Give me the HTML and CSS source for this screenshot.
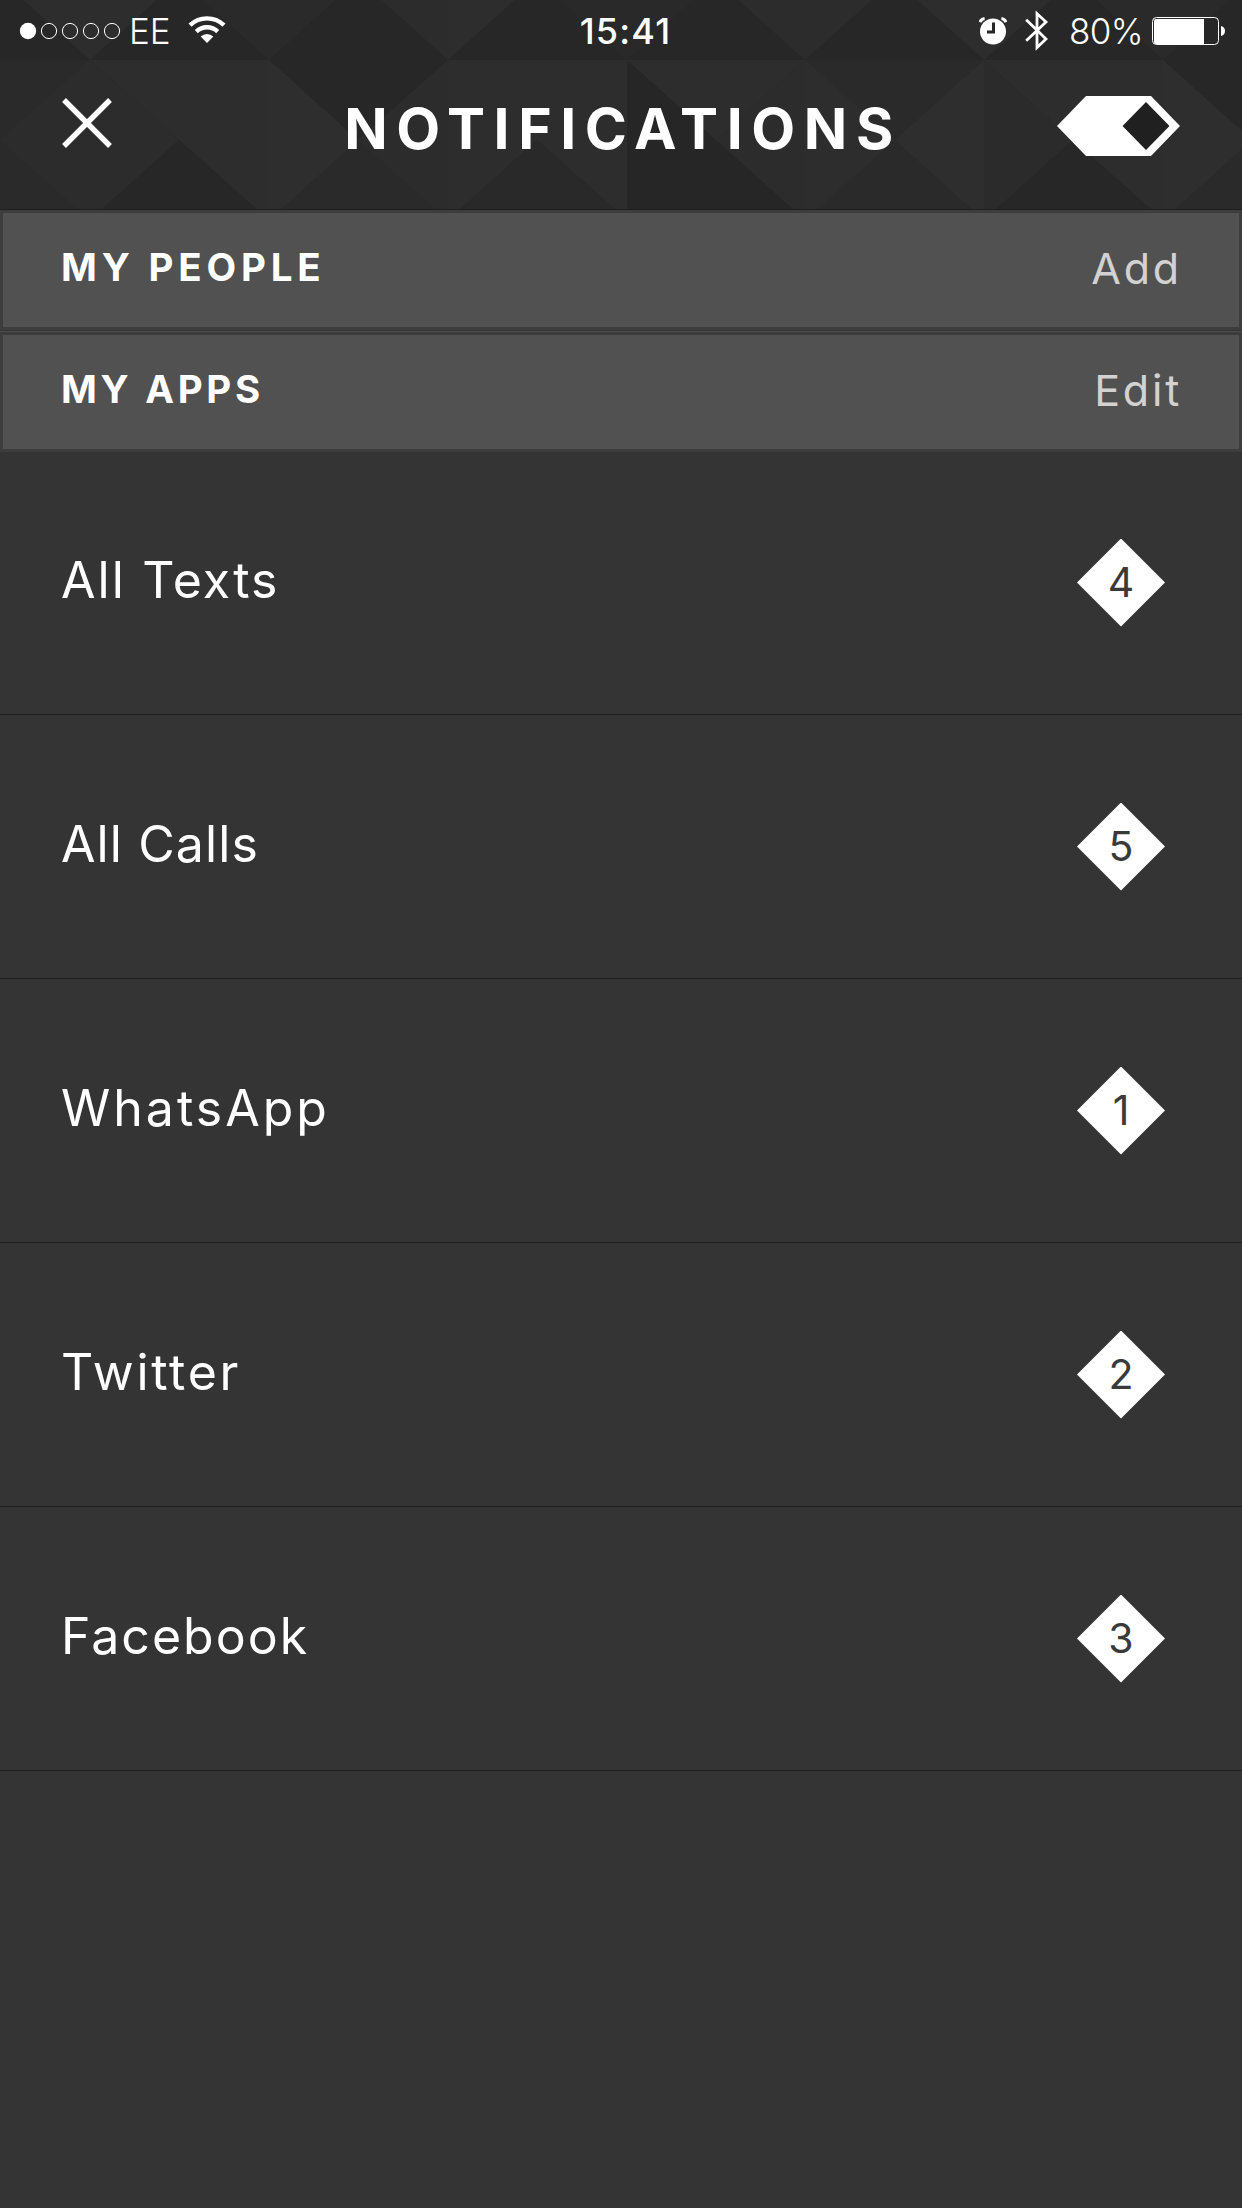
FILE: index.html
```html
<!DOCTYPE html>
<html lang="en">
<head>
    <meta charset="UTF-8">
    <meta name="viewport" content="width=device-width, initial-scale=1.0">
    <title>Notifications</title>
    <link rel="stylesheet" href="styles.css">
</head>
<body>
    <div class="top">
        <!-- faceted background -->
        <svg class="facets" width="1242" height="209" viewBox="0 0 1242 209">
            <rect width="1242" height="209" fill="#272727"/>
            <path fill="#2d2d2d" d="M1-20L90 60L179-20ZM895-20L984 60L1073-20Z"/>
            <path fill="#2a2a2a" d="M180-20L269 60L358-20ZM1074-20L1163 60L1252-20Z"/>
            <path fill="#2c2c2c" d="M359-20L448 60L448-20ZM716-20L805 60L894-20Z"/>
            <path fill="#2d2d2d" d="M448-20V60L537-20Z"/>
            <path fill="#292929" d="M538-20L627 60L716-20Z"/>
            <rect y="60" width="1242" height="149" fill="#2a2a2a"/>
            <path fill="#2c2c2c" d="M90 60L0 140L90 220L179 140Z"/>
            <path fill="#2d2d2d" d="M90 60H269V220L179 140Z"/>
            <path fill="#272727" d="M179 140L90 220H269ZM269 60H448L358 140Z"/>
            <path fill="#2e2e2e" d="M269 60L358 140L269 220Z"/>
            <path fill="#2c2c2c" d="M448 60L358 140L448 220Z"/>
            <path fill="#2d2d2d" d="M448 60H627V220L537 140L448 220Z"/>
            <path fill="#292929" d="M537 140L448 220H627Z"/>
            <path fill="#262626" d="M627 60L716 140L805 220H627Z"/>
            <path fill="#2d2d2d" d="M627 60H805L716 140Z"/>
            <path fill="#2c2c2c" d="M805 60L716 140L805 220Z"/>
            <path fill="#2d2d2d" d="M805 60L895 140L805 220Z"/>
            <path fill="#2e2e2e" d="M984 60L895 140L984 220Z"/>
            <path fill="#2b2b2b" d="M984 60L1073 140L984 220Z"/>
            <path fill="#2d2d2d" d="M984 60H1163V220L1073 140Z"/>
            <path fill="#272727" d="M1073 140L984 220H1163ZM1163 60H1342L1252 140Z"/>
            <path fill="#2e2e2e" d="M1163 60L1252 140L1163 220Z"/>
        </svg>

        <div class="status">
            <div class="status-left">
                <svg class="signal" width="104" height="18" viewBox="0 0 104 18">
                    <circle cx="9" cy="9" r="8.2" fill="#fff"/>
                    <g fill="none" stroke="#fff" stroke-width="1">
                        <circle cx="30" cy="9" r="7.6"/>
                        <circle cx="51" cy="9" r="7.6"/>
                        <circle cx="72" cy="9" r="7.6"/>
                        <circle cx="93" cy="9" r="7.6"/>
                    </g>
                </svg>
                <span class="carrier">EE</span>
                <svg class="wifi" width="38" height="28" viewBox="0 0 38 28">
                    <g fill="none" stroke="#fff" stroke-width="4.4">
                        <path d="M2 9.2A24.5 24.5 0 0 1 36 9.2"/>
                        <path d="M8.3 15.6A15.5 15.5 0 0 1 29.7 15.6"/>
                    </g>
                    <path fill="#fff" d="M19 27L12.7 20.6A9 9 0 0 1 25.3 20.6Z"/>
                </svg>
            </div>
            <div class="clock">15:41</div>
            <div class="status-right">
                <svg class="alarm" width="28" height="28" viewBox="0 0 28 28">
                    <circle cx="14" cy="14.5" r="13" fill="#fff"/>
                    <path fill="none" stroke="#fff" stroke-width="3" d="M1 5.2Q2.2 2 5.6 1.6M27 5.2Q25.8 2 22.4 1.6"/>
                    <path fill="none" stroke="#272727" stroke-width="3" d="M14.5 5.5V15H8"/>
                </svg>
                <svg class="bluetooth" width="24" height="42" viewBox="0 0 24 42">
                    <path fill="none" stroke="#fff" stroke-width="2.8" d="M1.2 9.8L21 29L12 37.6V3.6L21 12L1.2 30.8"/>
                </svg>
                <span class="percent">80%</span>
                <svg class="battery" width="74" height="30" viewBox="0 0 74 30">
                    <rect x="1.5" y="1.5" width="66" height="27" rx="4" fill="none" stroke="#fff"/>
                    <path fill="#fff" d="M5 3H53V28H5Q3 28 3 26V5Q3 3 5 3ZM70 10Q74 11 74 15Q74 19 70 20Z"/>
                </svg>
            </div>
        </div>

        <div class="nav">
            <svg class="close" width="50" height="50" viewBox="0 0 50 50">
                <path stroke="#fff" stroke-width="5.4" d="M2 2L48 48M48 2L2 48"/>
            </svg>
            <h1>NOTIFICATIONS</h1>
            <svg class="toggle" width="123" height="60" viewBox="0 0 123 60">
                <path fill="#fff" d="M0 30L29 0H94L123 30L94 60H29Z"/>
                <path fill="#202020" d="M65.5 30L89 6L112.5 30L89 54Z"/>
            </svg>
        </div>
    </div>

    <div class="section people">
        <h2>MY PEOPLE</h2>
        <span class="action">Add</span>
    </div>
    <div class="section apps">
        <h2>MY APPS</h2>
        <span class="action">Edit</span>
    </div>

    <ul class="list">
        <li><span class="name texts">All Texts</span><span class="badge">4</span></li>
        <li><span class="name calls">All Calls</span><span class="badge">5</span></li>
        <li><span class="name whatsapp">WhatsApp</span><span class="badge">1</span></li>
        <li><span class="name twitter">Twitter</span><span class="badge">2</span></li>
        <li><span class="name facebook">Facebook</span><span class="badge">3</span></li>
    </ul>
</body>
</html>
```
FILE: styles.css
```css
*{
    margin: 0;
    padding: 0;
    box-sizing: border-box;
}
body{
    width: 1242px;
    height: 2208px;
    overflow: hidden;
    background: #343434;
    color: #fff;
    font-family: Inter, "Liberation Sans", sans-serif;
}
svg{
    display: block;
    flex: none;
}
.top{
    position: relative;
    height: 210px;
    border-bottom: 1px solid #1f1f1f;
}
.facets{
    position: absolute;
    left: 0;
    top: 0;
}
.status{
    position: relative;
    display: grid;
    grid-template-columns: 1fr auto 1fr;
    align-items: center;
    height: 60px;
    padding: 1px 17px 0 19px;
    font-size: 35px;
    line-height: 60px;
}
.status-left,
.status-right{
    display: flex;
    align-items: center;
}
.status-right{
    justify-content: flex-end;
}
.signal{
    margin-top: -1px;
}
.carrier{
    margin-left: 6px;
    font-weight: 300;
}
.wifi{
    margin: -2px 0 0 17px;
}
.clock{
    padding-left: 7px;
    font-weight: 500;
    font-size: 36px;
    letter-spacing: 1.2px;
}
.alarm{
    margin: -1px 18px 0 0;
}
.bluetooth{
    margin-right: 20px;
}
.percent{
    font-weight: 300;
    letter-spacing: -0.6px;
}
.battery{
    margin-left: 8px;
}
.nav{
    position: relative;
    display: grid;
    grid-template-columns: 1fr auto 1fr;
    align-items: start;
    height: 149px;
    padding: 36px 62px 0;
}
.close{
    margin-top: 2px;
}
.toggle{
    justify-self: end;
}
h1{
    padding-left: 4px;
    font-size: 57px;
    font-weight: 700;
    line-height: 66px;
    letter-spacing: 8.6px;
}
.section{
    display: flex;
    justify-content: space-between;
    height: 120px;
    padding: 0 57px 0 58px;
    border: 3px solid #3d3d3d;
    background: #515151;
    line-height: 108px;
}
.apps{
    margin-top: 2px;
    border-top-color: #3b3b3b;
    box-shadow: 0 -1px #4d4d4d;
}
h2{
    font-size: 38.5px;
    font-weight: 700;
}
.people h2{
    letter-spacing: 4.8px;
}
.apps h2{
    letter-spacing: 3.7px;
}
.action{
    color: #d2d2d2;
    font-size: 43px;
    font-weight: 400;
    line-height: 110px;
    letter-spacing: 2.8px;
}
.list{
    list-style: none;
}
.list li{
    display: flex;
    align-items: center;
    justify-content: space-between;
    height: 264px;
    padding: 0 77px 0 61px;
    border-bottom: 1px solid #202020;
}
/* first row sits tight under the section bar */
.list li:first-child{
    height: 263px;
    padding-bottom: 1px;
}
.name{
    margin-top: -5px;
    font-size: 50px;
    font-weight: 400;
}
.texts{
    letter-spacing: 2.1px;
}
.calls{
    letter-spacing: 1.1px;
}
.whatsapp{
    letter-spacing: 3px;
}
.twitter{
    letter-spacing: 2.7px;
}
.facebook{
    letter-spacing: 2px;
}
.badge{
    width: 88px;
    height: 88px;
    background: #fff;
    clip-path: polygon(50% 0, 100% 50%, 50% 100%, 0 50%);
    color: #3a3a3a;
    font-size: 41px;
    line-height: 86px;
    text-align: center;
}
```
